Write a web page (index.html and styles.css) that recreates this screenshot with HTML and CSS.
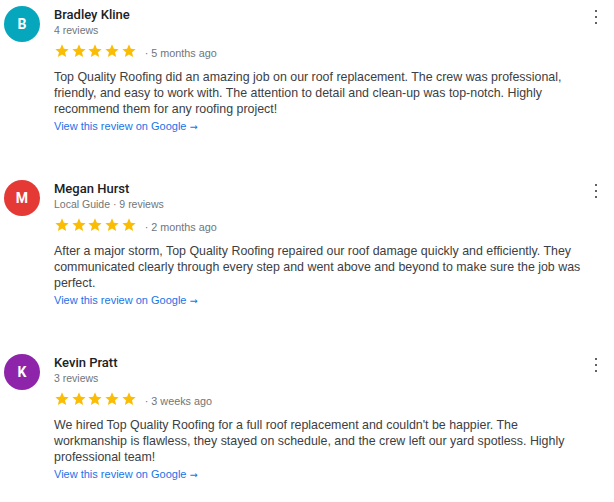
FILE: index.html
```html
<!DOCTYPE html>
<html lang="en">
<head>
<meta charset="utf-8">
<title>Reviews</title>
<link rel="stylesheet" href="styles.css">
</head>
<body>
<div class="reviews">
  <article class="review">
    <div class="avatar avatar-teal">B</div>
    <div class="content">
      <div class="name">Bradley Kline</div>
      <div class="meta">4 reviews</div>
      <div class="rating">
        <span class="stars">
          <svg viewBox="0 0 24 24"><path d="M12 17.27L18.18 21l-1.64-7.03L22 9.24l-7.19-.61L12 2 9.19 8.63 2 9.24l5.46 4.73L5.82 21z"/></svg>
          <svg viewBox="0 0 24 24"><path d="M12 17.27L18.18 21l-1.64-7.03L22 9.24l-7.19-.61L12 2 9.19 8.63 2 9.24l5.46 4.73L5.82 21z"/></svg>
          <svg viewBox="0 0 24 24"><path d="M12 17.27L18.18 21l-1.64-7.03L22 9.24l-7.19-.61L12 2 9.19 8.63 2 9.24l5.46 4.73L5.82 21z"/></svg>
          <svg viewBox="0 0 24 24"><path d="M12 17.27L18.18 21l-1.64-7.03L22 9.24l-7.19-.61L12 2 9.19 8.63 2 9.24l5.46 4.73L5.82 21z"/></svg>
          <svg viewBox="0 0 24 24"><path d="M12 17.27L18.18 21l-1.64-7.03L22 9.24l-7.19-.61L12 2 9.19 8.63 2 9.24l5.46 4.73L5.82 21z"/></svg>
        </span>
        <span class="when">· 5 months ago</span>
      </div>
      <p class="text">Top Quality Roofing did an amazing job on our roof replacement. The crew was professional, friendly, and easy to work with. The attention to detail and clean-up was top-notch. Highly recommend them for any roofing project!</p>
      <a class="link" href="#">View this review on Google <span class="arrow">→</span></a>
    </div>
    <button class="more" aria-label="More"><span></span><span></span><span></span></button>
  </article>

  <article class="review">
    <div class="avatar avatar-red">M</div>
    <div class="content">
      <div class="name">Megan Hurst</div>
      <div class="meta">Local Guide · 9 reviews</div>
      <div class="rating">
        <span class="stars">
          <svg viewBox="0 0 24 24"><path d="M12 17.27L18.18 21l-1.64-7.03L22 9.24l-7.19-.61L12 2 9.19 8.63 2 9.24l5.46 4.73L5.82 21z"/></svg>
          <svg viewBox="0 0 24 24"><path d="M12 17.27L18.18 21l-1.64-7.03L22 9.24l-7.19-.61L12 2 9.19 8.63 2 9.24l5.46 4.73L5.82 21z"/></svg>
          <svg viewBox="0 0 24 24"><path d="M12 17.27L18.18 21l-1.64-7.03L22 9.24l-7.19-.61L12 2 9.19 8.63 2 9.24l5.46 4.73L5.82 21z"/></svg>
          <svg viewBox="0 0 24 24"><path d="M12 17.27L18.18 21l-1.64-7.03L22 9.24l-7.19-.61L12 2 9.19 8.63 2 9.24l5.46 4.73L5.82 21z"/></svg>
          <svg viewBox="0 0 24 24"><path d="M12 17.27L18.18 21l-1.64-7.03L22 9.24l-7.19-.61L12 2 9.19 8.63 2 9.24l5.46 4.73L5.82 21z"/></svg>
        </span>
        <span class="when">· 2 months ago</span>
      </div>
      <p class="text">After a major storm, Top Quality Roofing repaired our roof damage quickly and efficiently. They communicated clearly through every step and went above and beyond to make sure the job was perfect.</p>
      <a class="link" href="#">View this review on Google <span class="arrow">→</span></a>
    </div>
    <button class="more" aria-label="More"><span></span><span></span><span></span></button>
  </article>

  <article class="review">
    <div class="avatar avatar-purple">K</div>
    <div class="content">
      <div class="name">Kevin Pratt</div>
      <div class="meta">3 reviews</div>
      <div class="rating">
        <span class="stars">
          <svg viewBox="0 0 24 24"><path d="M12 17.27L18.18 21l-1.64-7.03L22 9.24l-7.19-.61L12 2 9.19 8.63 2 9.24l5.46 4.73L5.82 21z"/></svg>
          <svg viewBox="0 0 24 24"><path d="M12 17.27L18.18 21l-1.64-7.03L22 9.24l-7.19-.61L12 2 9.19 8.63 2 9.24l5.46 4.73L5.82 21z"/></svg>
          <svg viewBox="0 0 24 24"><path d="M12 17.27L18.18 21l-1.64-7.03L22 9.24l-7.19-.61L12 2 9.19 8.63 2 9.24l5.46 4.73L5.82 21z"/></svg>
          <svg viewBox="0 0 24 24"><path d="M12 17.27L18.18 21l-1.64-7.03L22 9.24l-7.19-.61L12 2 9.19 8.63 2 9.24l5.46 4.73L5.82 21z"/></svg>
          <svg viewBox="0 0 24 24"><path d="M12 17.27L18.18 21l-1.64-7.03L22 9.24l-7.19-.61L12 2 9.19 8.63 2 9.24l5.46 4.73L5.82 21z"/></svg>
        </span>
        <span class="when">· 3 weeks ago</span>
      </div>
      <p class="text">We hired Top Quality Roofing for a full roof replacement and couldn't be happier. The workmanship is flawless, they stayed on schedule, and the crew left our yard spotless. Highly professional team!</p>
      <a class="link" href="#">View this review on Google <span class="arrow">→</span></a>
    </div>
    <button class="more" aria-label="More"><span></span><span></span><span></span></button>
  </article>
</div>
</body>
</html>
```

FILE: styles.css
```css
html, body {
  margin: 0;
  padding: 0;
  background: #ffffff;
}

body {
  font-family: "Liberation Sans", Arial, sans-serif;
  color: #202124;
}

.reviews {
  display: flex;
  flex-direction: column;
  gap: 46px;
  padding: 6px 0 0 4px;
}

.review {
  position: relative;
  display: flex;
  align-items: flex-start;
}

.avatar {
  flex: 0 0 36px;
  width: 36px;
  height: 36px;
  margin-right: 14px;
  border-radius: 50%;
  color: #ffffff;
  font-family: "Roboto", "Liberation Sans", sans-serif;
  font-size: 14px;
  font-weight: 700;
  display: flex;
  align-items: center;
  justify-content: center;
}

.avatar-teal { background: #06a7bd; }
.avatar-red { background: #e53935; }
.avatar-purple { background: #8e24aa; }

.content {
  flex: 0 0 540px;
  width: 540px;
  display: flex;
  flex-direction: column;
  align-items: flex-start;
}

.name {
  font-family: "Roboto", "Liberation Sans", sans-serif;
  font-size: 13px;
  font-weight: 500;
  line-height: 17px;
  color: #202124;
}

.meta {
  font-size: 10.5px;
  line-height: 15px;
  color: #70757a;
}

.rating {
  display: flex;
  align-items: center;
  height: 18px;
  margin-top: 4px;
}

.stars {
  display: flex;
  gap: 0.7px;
}

.stars svg {
  width: 16px;
  height: 16px;
  fill: #fbbc04;
}

.when {
  font-size: 10.8px;
  color: #70757a;
  margin-left: 8px;
  padding-top: 3px;
}

.text {
  margin: 9px 0 0;
  font-size: 12.4px;
  line-height: 16px;
  color: #3c4043;
}

.link {
  display: block;
  height: 16px;
  margin-top: 1px;
  font-size: 11px;
  line-height: 16px;
  color: #1a73e8;
  text-decoration: none;
}

.arrow {
  font-family: "DejaVu Sans", sans-serif;
  font-size: 9.5px;
  line-height: 0;
}

.more {
  position: absolute;
  top: 4px;
  right: 16px;
  padding: 0;
  width: 4px;
  height: 14px;
  border: 0;
  background: transparent;
  display: flex;
  flex-direction: column;
  align-items: center;
  justify-content: space-between;
}

.more span {
  width: 2px;
  height: 2px;
  background: #5f6368;
  display: block;
}
```
